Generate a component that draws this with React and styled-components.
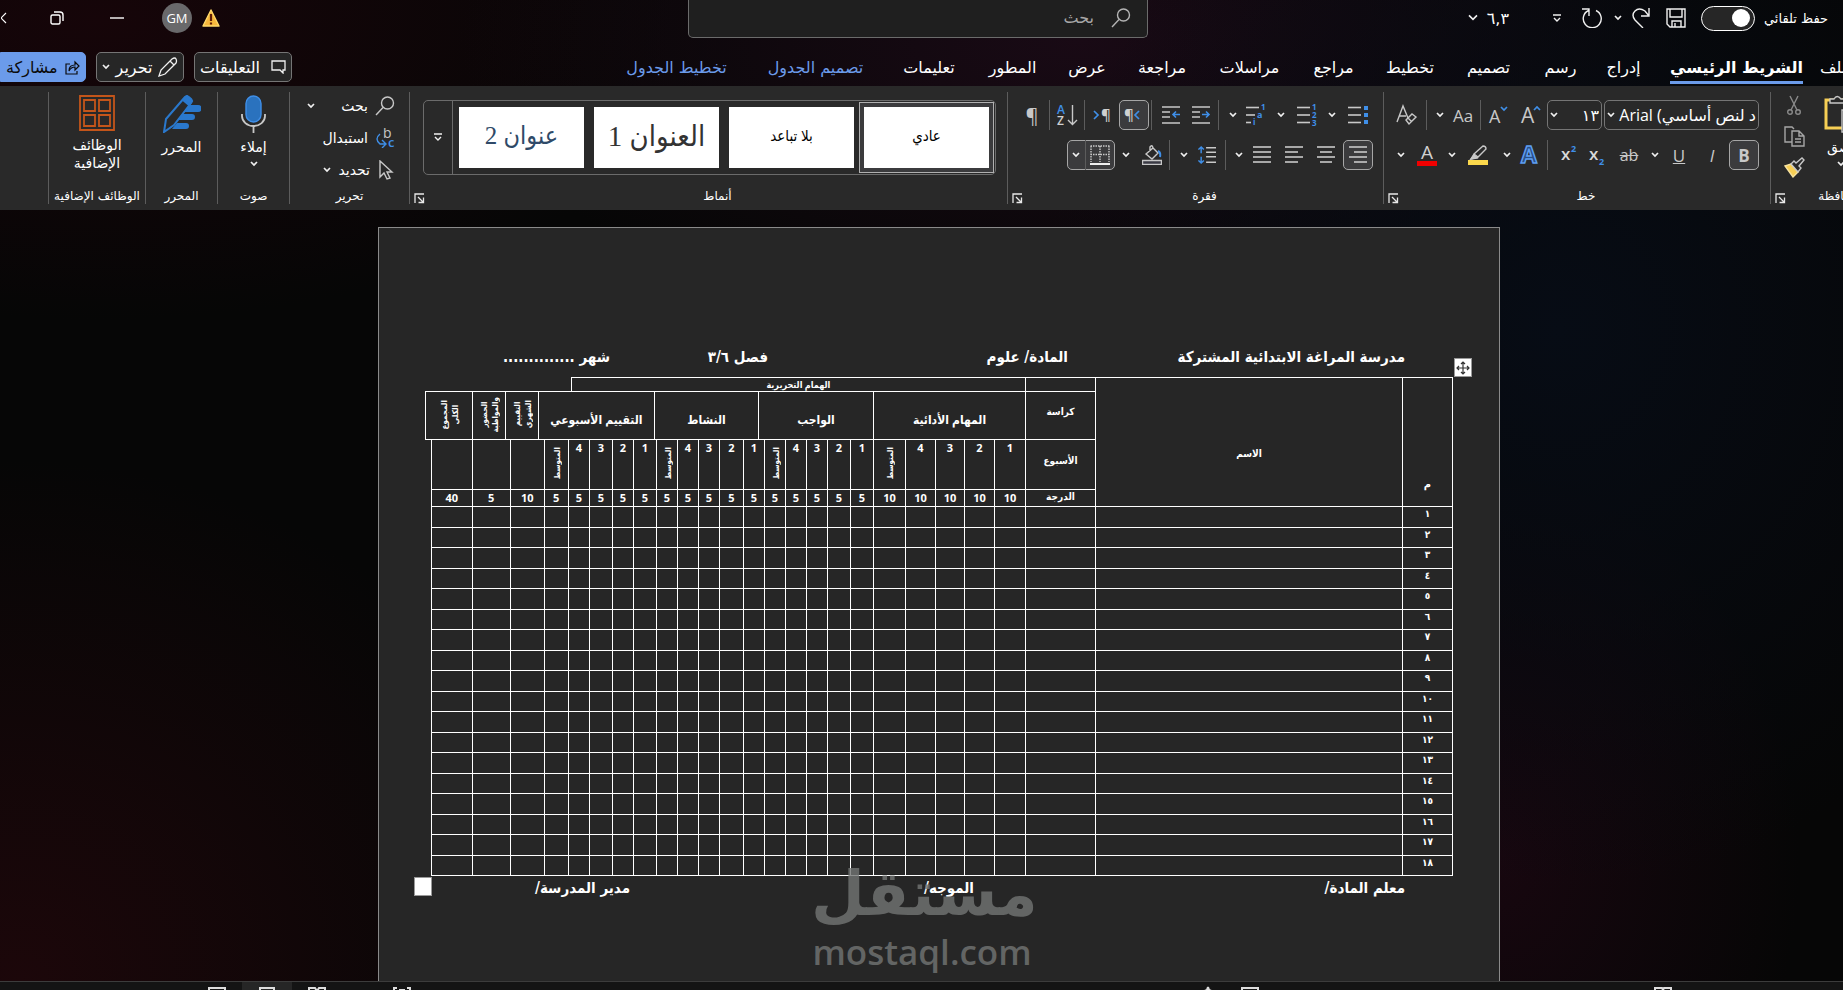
import React, { useState } from "react";
import styled, { createGlobalStyle, css } from "styled-components";

const GlobalStyle = createGlobalStyle`
  * {
    box-sizing: border-box;
  }

  body {
    margin: 0;
    background: #060606;
    color: #fff;
    font-family: "DejaVu Sans", sans-serif;
    overflow: hidden;
  }

  button,
  input {
    font-family: inherit;
    color: inherit;
  }
`;

const Window = styled.div`
  display: flex;
  flex-direction: column;
  height: 100vh;
  overflow: hidden;
  background: radial-gradient(ellipse 520px 560px at 1560px 330px, #070c15, transparent),
    radial-gradient(ellipse 560px 520px at 20px 980px, #1c070a, transparent),
    radial-gradient(ellipse 620px 300px at 1080px 40px, #190a15, transparent),
    radial-gradient(ellipse 620px 300px at 100px 20px, #160509, transparent),
    radial-gradient(ellipse 300px 400px at 1500px 860px, #17070f, transparent), #060606;
`;

const TitleBar = styled.header`
  display: grid;
  grid-template-columns: minmax(0, 1fr) 460px minmax(0, 1fr);
  height: 38px;
  padding-right: 7px;
`;

const TitleTools = styled.div`
  display: flex;
  align-items: center;
  height: 36px;
  padding-right: 8px;
`;

const WindowTools = styled.div`
  display: flex;
  align-items: center;
  justify-content: flex-end;
  height: 36px;
`;

const SearchBox = styled.label`
  display: flex;
  align-items: center;
  gap: 17px;
  height: 38px;
  padding: 0 16px 2px;
  background: #1f1f1f;
  border: 1px solid #6b6b6b;
  border-top: 0;
  border-radius: 0 0 5px 5px;
  color: #b4b4b4;

  input {
    flex: 1;
    min-width: 0;
    padding: 0;
    border: 0;
    outline: 0;
    background: transparent;
    font-size: 16px;
  }

  input::placeholder {
    color: #a8a8a8;
    opacity: 1;
  }
`;

const AutoSave = styled.label`
  display: flex;
  align-items: center;
  gap: 9px;
  font-size: 13px;
  white-space: nowrap;

  input {
    appearance: none;
    display: flex;
    align-items: center;
    width: 54px;
    height: 25px;
    margin: 0;
    padding: 0 4px;
    background: #262626;
    border: 1px solid #fff;
    border-radius: 13px;
  }

  input::before {
    content: "";
    width: 18px;
    height: 18px;
    border-radius: 50%;
    background: #fff;
  }
`;

const IconButton = styled.button`
  flex: none;
  display: flex;
  align-items: center;
  justify-content: center;
  width: ${(props) => props.$w || 30}px;
  height: 30px;
  padding: 0;
  border: 1px solid transparent;
  border-radius: 5px;
  background: transparent;
  color: #c8c8c8;
  font-family: "Open Sans", sans-serif;
  font-size: ${(props) => props.$size || 17}px;

  ${(props) =>
    props.$active &&
    css`
      background: #3b3b3d;
      border-color: #a6a6a6;
    `}
`;

const Version = styled.button`
  display: flex;
  align-items: center;
  gap: 8px;
  margin-right: 26px;
  padding: 0;
  border: 0;
  background: transparent;
  font-size: 16px;
`;

const Avatar = styled.button`
  width: 30px;
  height: 30px;
  margin: 0 9px 0 30px;
  padding: 0;
  border: 0;
  border-radius: 50%;
  background: #69696b;
  font: 13px "Open Sans", sans-serif;
`;

const TabBar = styled.nav`
  display: flex;
  align-items: flex-start;
  justify-content: space-between;
  height: 48px;
  padding-top: 14px;
`;

const Tabs = styled.div`
  display: flex;
  align-items: center;
  height: 32px;
`;

const Tab = styled.button`
  flex: none;
  width: ${(props) => props.$w}px;
  height: 32px;
  padding: 0;
  border: 0;
  background: transparent;
  color: ${(props) => (props.$blue ? "#6b9bea" : "#fff")};
  font-size: 16px;
  white-space: nowrap;

  span {
    display: inline-block;
    height: 32px;
    line-height: 31px;
  }

  ${(props) =>
    props.$current &&
    css`
      font-weight: bold;

      span {
        border-bottom: 3px solid #6b9bea;
      }
    `}
`;

const FileTab = styled(Tab)`
  margin-right: -17px;
  text-align: left;
`;

const Actions = styled.div`
  display: flex;
  gap: 10px;
`;

const ActionButton = styled.button`
  display: flex;
  align-items: center;
  justify-content: space-between;
  width: ${(props) => props.$w}px;
  height: 30px;
  padding: 0 5px;
  border: 1px solid #757575;
  border-radius: 5px;
  background: #262626;
  font-size: 16px;
  white-space: nowrap;
`;

const ShareButton = styled(ActionButton)`
  border-color: #6b9bea;
  border-radius: 0 5px 5px 0;
  background: #6b9bea;
  color: #0c0c0c;
`;

const Ribbon = styled.section`
  display: flex;
  flex: none;
  height: 124px;
  padding: 6px 0;
  background: #292929;
`;

const Group = styled.div`
  position: relative;
  flex: none;
  display: flex;
  flex-direction: column;
  width: ${(props) => props.$w}px;
  height: 112px;
  border-left: 1px solid #5c5c5c;
`;

// runs past the right edge of the window
const ClippedGroup = styled(Group)`
  margin-right: -45px;
`;

const GroupBody = styled.div`
  display: flex;
  flex-direction: column;
  gap: 10px;
  height: 97px;
  padding: ${(props) => props.$pad || "3px 0 0"};
`;

const ClipBody = styled(GroupBody)`
  flex-direction: row;
  gap: 9px;
`;

const GroupLabel = styled.div`
  height: 15px;
  padding-left: ${(props) => (props.$launcher ? 18 : 0)}px;
  font-size: 12px;
  line-height: 15px;
  text-align: center;
  white-space: nowrap;
`;

const Launcher = styled.button`
  position: absolute;
  left: 4px;
  bottom: 0;
  width: 11px;
  height: 11px;
  padding: 0;
  border: 0;
  background: transparent;
  line-height: 0;
`;

const ToolRow = styled.div`
  display: flex;
  align-items: center;
  height: 30px;
`;

const Separator = styled.div`
  flex: none;
  width: ${(props) => props.$w}px;
  height: 30px;
  display: flex;
  justify-content: center;

  &::before {
    content: "";
    width: 1px;
    background: #5c5c5c;
  }
`;

const Combo = styled.div`
  display: flex;
  align-items: center;
  width: ${(props) => props.$w}px;
  height: 30px;
  margin-left: ${(props) => props.$gap || 0}px;
  padding: 0 2px 0 0;
  border: 1px solid #757575;
  border-radius: 5px;

  input {
    flex: 1;
    min-width: 0;
    padding: 0;
    border: 0;
    outline: 0;
    background: transparent;
    font: 16px "Open Sans", "DejaVu Sans", sans-serif;
  }

  button {
    width: 12px;
    border: 0;
    padding: 0;
    background: transparent;
    line-height: 0;
  }
`;

const Gallery = styled.div`
  display: flex;
  justify-content: space-between;
  height: 75px;
  border: 1px solid #6b6b6b;
  border-radius: 5px;
`;

const StyleCards = styled.div`
  display: flex;
  padding: 1px;
`;

const StyleFrame = styled.button`
  width: 135px;
  height: 71px;
  padding: 4px;
  border: 1px solid ${(props) => (props.$selected ? "#b0b0b0" : "transparent")};
  background: ${(props) => (props.$selected ? "#3b3b3d" : "transparent")};

  span {
    display: flex;
    align-items: center;
    justify-content: center;
    height: 61px;
    padding-bottom: 4px;
    background: #fff;
    color: ${(props) => props.$color || "#000"};
    font-family: "Liberation Serif", "DejaVu Sans Condensed", serif;
    font-size: ${(props) => props.$size || 15}px;
  }
`;

const GalleryMore = styled.button`
  width: 29px;
  padding: 0;
  border: 0;
  border-right: 1px solid #6b6b6b;
  background: transparent;
`;

const LineButton = styled.button`
  display: flex;
  align-items: center;
  gap: 7px;
  height: 22px;
  padding: 0;
  border: 0;
  background: transparent;
  font-size: 14px;

  svg:last-child {
    margin-right: ${(props) => props.$push || 0}px;
  }
`;

const BigButton = styled.button`
  display: flex;
  flex-direction: column;
  align-items: center;
  gap: 5px;
  width: 100%;
  padding: 0;
  border: 0;
  background: transparent;
  font-size: 14px;
  line-height: 18px;

  svg {
    flex: none;
  }
`;

const ClipTools = styled.div`
  display: flex;
  flex-direction: column;
  align-items: center;
  gap: 10px;
  width: 26px;
`;

const PasteButton = styled(BigButton)`
  flex: none;
  width: 50px;
`;

const Workspace = styled.main`
  flex: 1;
  display: flex;
  justify-content: center;
  min-height: 0;
  padding: 17px 0 0 35px;
  overflow: hidden;
`;

const Paper = styled.article`
  position: relative;
  width: 1122px;
  padding: 117px 46px 0 47px;
  border: 1px solid #8a8a8a;
  border-bottom: 0;
  background: #262626;
`;

const DocLine = styled.div`
  display: grid;
  grid-template-columns: ${(props) => props.$cols};
  height: ${(props) => props.$h}px;
  padding-right: 48px;
  font-family: "DejaVu Sans Condensed", sans-serif;
  font-size: 15px;
  font-weight: bold;
  line-height: 24px;
  white-space: nowrap;
`;

const TableWrap = styled.div`
  position: relative;
`;

const MoveHandle = styled.button`
  position: absolute;
  top: -19px;
  right: -19px;
  width: 18px;
  height: 19px;
  padding: 0;
  border: 1px solid #999;
  background: #fff;
  line-height: 0;
`;

const SizeHandle = styled.span`
  position: absolute;
  bottom: -20px;
  left: -12px;
  width: 18px;
  height: 19px;
  border: 1px solid #999;
  background: #fff;
`;

const Sheet = styled.table`
  width: 100%;
  height: 499px;
  table-layout: fixed;
  border-collapse: collapse;
`;

const Cell = styled.td`
  padding: ${(props) => props.$pad || "0"};
  border: ${(props) => (props.$blank ? "0" : "1px solid #fff")};
  line-height: 12px;
  text-align: center;
  vertical-align: ${(props) => props.$align || "middle"};
  font-family: "Open Sans", "DejaVu Sans Condensed", sans-serif;
  font-size: ${(props) => props.$size || 11}px;
  font-weight: bold;
  white-space: nowrap;
`;

const HeadRow = styled.tr`
  height: ${(props) => props.$h}px;
`;

const Upright = styled.span`
  display: inline-block;
  writing-mode: vertical-rl;
  transform: rotate(180deg);
  font-size: 8px;
  line-height: 11px;
`;

const Watermark = styled.div`
  position: absolute;
  left: 432px;
  bottom: 9px;
  width: 222px;
  color: #737574;
  text-align: center;
  opacity: 0.8;
  direction: ltr;
  pointer-events: none;

  strong {
    display: block;
    font: bold 62px/76px "DejaVu Sans", sans-serif;
  }

  span {
    display: block;
    font: 600 35px/40px "Open Sans", sans-serif;
  }
`;

const StatusBar = styled.footer`
  display: flex;
  flex: none;
  height: 9px;
  padding: 0 170px 0 114px;
  border-top: 1px solid #3c3c3c;
  background: #141414;
  overflow: hidden;
`;

const StatusGroup = styled.div`
  display: flex;
  align-items: flex-start;
  gap: ${(props) => props.$gap || 0}px;
  margin-right: ${(props) => props.$push};
`;

const StatusButton = styled.button`
  flex: none;
  display: flex;
  justify-content: center;
  align-items: flex-start;
  width: ${(props) => props.$w || 20}px;
  height: 24px;
  margin-left: ${(props) => props.$gap || 0}px;
  padding: 4px 0 0;
  border: 0;
  background: ${(props) => (props.$active ? "#262626" : "transparent")};
`;

const Icon = ({ w = 20, h = w, box, children, stroke = "#c8c8c8", sw = 1.4 }) => (
  <svg
    width={w}
    height={h}
    viewBox={box || `0 0 ${w} ${h}`}
    fill="none"
    stroke={stroke}
    strokeWidth={sw}
    aria-hidden="true"
  >
    {children}
  </svg>
);

const Chevron = ({ w = 8 }) => (
  <Icon w={w} h={w / 2 + 2} box="0 0 8 6" stroke="#f0f0f0" sw={w > 8 ? 1.2 : 1.7}>
    <path d="M1 1l3 3 3-3" />
  </Icon>
);

const ChevronButton = ({ w, label }) => (
  <IconButton $w={w} aria-label={label}>
    <Chevron />
  </IconButton>
);

const MoreIcon = () => (
  <Icon w={10} h={9} stroke="#f0f0f0">
    <path d="M1 1h8M2 4l3 3 3-3" />
  </Icon>
);

const Corner = () => (
  <Launcher aria-label="المزيد">
    <Icon w={11} stroke="#e8e8e8" sw={1.3}>
      <path d="M1 10V1h9M4 4l5 5M9.500 4.500v5h-5" />
    </Icon>
  </Launcher>
);

const blue = "#3f8fe8";

// rows: [x1, x2] of each line, top to bottom
const Lines = ({ rows, step = 5, top = 2 }) =>
  rows.map(([a, b], i) => <path key={i} d={`M${a} ${top + i * step}H${b}`} strokeWidth="1.6" />);

const AlignIcon = ({ rows }) => (
  <Icon w={20} h={20}>
    <Lines rows={rows} />
  </Icon>
);

const IconText = ({ x, y, size = 7, fill = blue, weight = 700, children }) => (
  <text
    x={x}
    y={y}
    fontSize={size}
    fill={fill}
    stroke="none"
    fontWeight={weight}
    fontFamily="Open Sans"
    direction="ltr"
  >
    {children}
  </text>
);

const BulletsIcon = () => (
  <Icon w={20} h={20}>
    <Lines rows={[[0, 13], [0, 13], [0, 13]]} step={7.5} top={2.5} />
    <path d="M16 1h4v4h-4zM16 8h4v4h-4zM16 15h4v4h-4z" fill={blue} stroke="none" />
  </Icon>
);

const NumberingIcon = () => (
  <Icon w={20} h={22}>
    <Lines rows={[[0, 13], [0, 13], [0, 13]]} step={7.5} top={3.5} />
    <IconText x={15} y={6} size={8}>1</IconText>
    <IconText x={15} y={14} size={8}>2</IconText>
    <IconText x={15} y={22} size={8}>3</IconText>
  </Icon>
);

const MultiIcon = () => (
  <Icon w={20} h={22}>
    <Lines rows={[[0, 13], [0, 9], [0, 5]]} step={7.5} top={3.5} />
    <IconText x={15} y={6} size={8}>1</IconText>
    <IconText x={11} y={14} size={9}>a</IconText>
    <IconText x={7} y={21} size={8}>i</IconText>
  </Icon>
);

const IndentIcon = ({ left }) => (
  <Icon w={20} h={20}>
    <path d="M1 2h18M1 7h8M1 12h8M1 18h18" strokeWidth="1.6" />
    <path
      stroke={blue}
      strokeWidth="1.6"
      d={left ? "M19 9.500h-7M15 6.500l-3 3 3 3" : "M11 9.500h7M15 6.500l3 3-3 3"}
    />
  </Icon>
);

const DirectionIcon = ({ rtl }) => (
  <Icon w={20} h={16}>
    <IconText x={rtl ? 0 : 8} y={13} size={15} fill="#d0d0d0" weight={600}>
      ¶
    </IconText>
    <path stroke={blue} strokeWidth="1.7" d={rtl ? "M15 4l-4 4 4 4" : "M1 4l4 4-4 4"} />
  </Icon>
);

const SortIcon = () => (
  <Icon w={22} h={22}>
    <IconText x={1} y={10} size={12} weight={600}>A</IconText>
    <IconText x={1} y={21} size={12} fill="#d0d0d0" weight={600}>Z</IconText>
    <path d="M16.500 1v19M12 16l4.500 4.500 4.500-4.500" />
  </Icon>
);

const SpacingIcon = () => (
  <Icon w={20} h={20}>
    <path d="M9 2h11M9 7h11M9 12h11M9 18h11" strokeWidth="1.6" />
    <path stroke={blue} strokeWidth="1.6" d="M3.500 1v7M.500 4l3-3 3 3M3.500 12v7M.500 16l3 3 3-3" />
  </Icon>
);

const FillIcon = () => (
  <Icon w={20} h={20}>
    <path d="M4 9l7-6 5 5-6 6zM8 6V2q2-3 3 1" />
    <path d="M16 6q3 1 2 6" stroke={blue} strokeWidth="2" />
    <path d="M.500 15.500h19v4H.500z" fill="#3a3a44" />
  </Icon>
);

const BordersIcon = () => (
  <Icon w={20} h={20}>
    <path d="M.500 1h19M.500 9.500h19M1 1v16M10 1v16M19 1v16" strokeDasharray="1.500 1" />
    <path d="M0 19h20" strokeWidth="2" stroke="#eee" />
  </Icon>
);

const ClearIcon = () => (
  <Icon w={22} h={22}>
    <path d="M1 18L7 2l5 12M3 12h7" />
    <path d="M10 16l6-6 4 3-7 7zM12 14l4 4" />
  </Icon>
);

const GrowIcon = ({ down }) => (
  <Icon w={22} h={20}>
    <IconText x={1} y={18} size={down ? 18 : 21} fill="#c8c8c8" weight={400}>
      A
    </IconText>
    <path stroke={blue} strokeWidth="1.7" d={down ? "M13 2l3 3 3-3" : "M14 5l3-3 3 3"} />
  </Icon>
);

const HighlightIcon = () => (
  <Icon w={20} h={20}>
    <path d="M6 9L15 1q3 0 3 3L10 12zM6 9l-3 5 7-2" />
    <path d="M3 14l3-4 3 3z" fill="#c8c8c8" />
    <path d="M0 17.500h20" stroke="#fbd84c" strokeWidth="5" />
  </Icon>
);

const FontColorIcon = () => (
  <Icon w={20} h={21}>
    <IconText x={4} y={14} size={19} fill="#d0d0d0" weight={400}>A</IconText>
    <path d="M0 18.500h20" stroke="#f00000" strokeWidth="5" />
  </Icon>
);

const EffectsIcon = () => (
  <Icon w={20} h={20}>
    <text
      x="2"
      y="18"
      fontSize="23"
      fontWeight="700"
      fontFamily="Open Sans"
      direction="ltr"
      fill="#2a4f86"
      stroke="#5d9df0"
      strokeWidth="1.5"
    >
      A
    </text>
  </Icon>
);

const ScriptIcon = ({ sup }) => (
  <Icon w={16} h={22}>
    <IconText x={0} y={16} size={17} fill="#d8d8d8" weight={600}>x</IconText>
    <IconText x={10} y={sup ? 8 : 21} size={9}>2</IconText>
  </Icon>
);

const SaveIcon = () => (
  <Icon w={20} h={20} stroke="#f0f0f0">
    <path d="M1 1h18v18H4l-3-3zM4 1v8h12V1M6 19v-6h9v6M9 19v-4" />
  </Icon>
);

const RedoIcon = () => (
  <Icon w={18} h={20} stroke="#f0f0f0">
    <path d="M17 0v8h-8M17 8L13 3Q7-1 3 3t0 9l8 8" />
  </Icon>
);

const UndoIcon = () => (
  <Icon w={20} h={20} stroke="#f0f0f0">
    <path d="M0 1h7v7M14 2.500A9 9 0 1 1 6.500 2.500" />
  </Icon>
);

const SearchIcon = ({ stroke }) => (
  <Icon w={20} h={20} stroke={stroke}>
    <circle cx="12.500" cy="7" r="6" />
    <path d="M8 11.500L1 19" />
  </Icon>
);

const WarningIcon = () => (
  <Icon w={20} h={20}>
    <path d="M10 2l8 16H2z" fill="#f6b73c" stroke="#ffd96a" strokeLinejoin="round" />
    <path d="M10 6v7M10 14.500v2" stroke="#5d1c06" strokeWidth="2.2" />
  </Icon>
);

const CutIcon = () => (
  <Icon w={14} h={21} stroke="#8a8a8a">
    <path d="M3 1l7 14M11 1L4 15" />
    <circle cx="3" cy="17" r="2.3" />
    <circle cx="11" cy="17" r="2.3" />
  </Icon>
);

const CopyIcon = () => (
  <Icon w={21} h={21} stroke="#a6a6a6">
    <path d="M8 16H1V1h7l2 2M8 5h7l5 5v10H8zM15 5v5h5M11 13h6M11 16h6" />
  </Icon>
);

const BrushIcon = () => (
  <Icon w={21} h={21}>
    <path d="M1 9l6-2 7 8-5 5z" fill="#f7cf55" stroke="#f7e3a0" />
    <path d="M7 7l3-3 2 2 6-5 2 2-5 6 2 2-3 4z" fill="#292929" />
  </Icon>
);

const PasteIcon = () => (
  <Icon w={36} h={38}>
    <path d="M3 5h28v28H3z" stroke="#f7cf55" strokeWidth="3" />
    <path d="M7 8V4h4q3-5 7 0h6v4z" fill="#292929" />
    <path d="M19 15h15v22H19z" fill="#292929" />
  </Icon>
);

const MicIcon = () => (
  <Icon w={26} h={38}>
    <rect x="5" y="1" width="15" height="26" rx="7.5" fill="#2a72be" stroke={blue} />
    <path d="M1 19v2a11.500 10 0 0 0 23 0v-2M12.500 31v7" strokeWidth="1.8" />
  </Icon>
);

const EditorIcon = () => (
  <Icon w={38} h={38} stroke="#2a78cc" sw={2}>
    <path
      d="M26 10h9a3.500 3.500 0 0 1 0 7H21zM20 19h9a3 3 0 0 1 0 6H15zM14 28h9a3 3 0 0 1 0 6H9z"
      fill="#2a78cc"
      strokeWidth="0"
    />
    <path d="M1 37l2-13L22 2q2-2 5 1 3 2 1 5L11 30z" />
    <path d="M20 5l6 5 3-4-5-5z" fill="#2a78cc" />
  </Icon>
);

const AddinsIcon = () => (
  <Icon w={36} h={36} stroke="#c4551a" sw={1.8}>
    <path d="M1 1h34v34H1zM5 5h11v11H5zM20 5h11v11H20zM5 20h11v11H5zM20 20h11v11H20z" />
  </Icon>
);

const ReplaceIcon = () => (
  <Icon w={20} h={20}>
    <IconText x={8} y={10} size={14} fill="#c8c8c8" weight={400}>b</IconText>
    <IconText x={13} y={19} size={13} weight={600}>c</IconText>
    <path stroke={blue} d="M5 6q-6 5 0 10h5M7 12l4 4-4 4" />
  </Icon>
);

const SelectIcon = () => (
  <Icon w={18} h={20}>
    <path d="M3 1v16l4-4 3 6 3-1-3-6h5z" />
  </Icon>
);

const CommentIcon = () => (
  <Icon w={15} h={14} stroke="#f0f0f0" sw={1.3}>
    <path d="M1 1h13v9h-2v3l-3-3H1z" />
  </Icon>
);

const PencilIcon = () => (
  <Icon w={20} h={20} stroke="#f0f0f0" sw={1.3}>
    <path d="M1 19l2-6L14 2q3-2 4 0t0 4L7 17zM12 4l4 4" />
  </Icon>
);

const ShareIcon = () => (
  <Icon w={15} h={15} stroke="#0c0c0c" sw={1.2}>
    <path d="M5 4H1v10h11v-3M4 11q0-6 6-6V2l4 4-4 4V7q-4 0-6 4z" />
  </Icon>
);

const StatusIcon = ({ d, w = 18 }) => (
  <Icon w={w} h={12} stroke="#ddd" sw={2}>
    <path d={d} />
  </Icon>
);

const tabs = [
  { text: "الشريط الرئيسي", w: 167, current: true },
  { text: "إدراج", w: 59 },
  { text: "رسم", w: 67 },
  { text: "تصميم", w: 77 },
  { text: "تخطيط", w: 80 },
  { text: "مراجع", w: 73 },
  { text: "مراسلات", w: 95 },
  { text: "مراجعة", w: 80 },
  { text: "عرض", w: 70 },
  { text: "المطور", w: 79 },
  { text: "تعليمات", w: 88 },
  { text: "تصميم الجدول", w: 139, blue: true },
  { text: "تخطيط الجدول", w: 139, blue: true },
];

const cards = [
  { text: "عادي", selected: true },
  { text: "بلا تباعد" },
  { text: "العنوان 1", size: 29, color: "#333" },
  { text: "عنوان 2", size: 25, color: "#2f4a68" },
];

// Column widths from the right edge; some exist only so that the
// merged header cells can end between two body columns.
const columns = [
  50, 307, 70, 31, 30, 29, 30, 32, 23, 23, 21, 21, 21, 6, 15, 24, 21, 21, 21, 2, 21, 21, 23, 18, 3,
  24, 6, 28, 5, 33, 41, 6,
];

// [week, colSpan, full mark]
const weekCells = [
  ["1", 1, 10], ["2", 1, 10], ["3", 1, 10], ["4", 1, 10], ["المتوسط", 1, 10],
  ["1", 1, 5], ["2", 1, 5], ["3", 1, 5], ["4", 1, 5], ["المتوسط", 1, 5],
  ["1", 2, 5], ["2", 1, 5], ["3", 1, 5], ["4", 1, 5], ["المتوسط", 1, 5],
  ["1", 2, 5], ["2", 1, 5], ["3", 1, 5], ["4", 2, 5], ["المتوسط", 1, 5],
  ["", 2, 10], ["", 2, 5], ["", 1, 40],
];

const groupCells = [
  ["المهام الأدائية", 5],
  ["الواجب", 6],
  ["النشاط", 6],
  ["التقييم الأسبوعي", 7],
];

const totalCells = [
  ["التقييم", "الشهري", 2],
  ["الحضور", "والمواظبة", 1],
  ["المجموع", "الكلي", 2],
];

const rowNumbers = [
  "١", "٢", "٣", "٤", "٥", "٦", "٧", "٨", "٩",
  "١٠", "١١", "١٢", "١٣", "١٤", "١٥", "١٦", "١٧", "١٨",
];

const GradeTable = () => (
  <Sheet>
    <colgroup>
      {columns.map((w, i) => (
        <col key={i} style={{ width: w }} />
      ))}
    </colgroup>
    <thead>
      <HeadRow $h={14}>
        <Cell as="th" rowSpan={4} $align="bottom" $pad="0 0 16px">م</Cell>
        <Cell as="th" rowSpan={4} $size={10} $pad="22px 0 0">الاسم</Cell>
        <Cell />
        <Cell as="th" colSpan={21} $size={9}>الهمام التحريرية</Cell>
        <Cell colSpan={8} $blank />
      </HeadRow>
      <HeadRow $h={48}>
        <Cell as="th" $size={10} $pad="0 0 10px">كراسة</Cell>
        {groupCells.map(([text, span]) => (
          <Cell as="th" key={text} colSpan={span} $size={12} $pad="8px 0 0">{text}</Cell>
        ))}
        {totalCells.map(([a, b, span]) => (
          <Cell as="th" key={a} colSpan={span}>
            <Upright>
              {a}
              <br />
              {b}
            </Upright>
          </Cell>
        ))}
      </HeadRow>
      <HeadRow $h={50}>
        <Cell as="th" $size={10} $pad="0 0 10px">الأسبوع</Cell>
        {weekCells.map(([text, span], i) =>
          text.length > 1 ? (
            <Cell as="th" key={i} colSpan={span}>
              <Upright>{text}</Upright>
            </Cell>
          ) : (
            <Cell as="th" key={i} colSpan={span} $align="top" $pad="2px 0 0">
              {text}
            </Cell>
          )
        )}
        <Cell $blank />
      </HeadRow>
      <HeadRow $h={16}>
        <Cell as="th" $size={10} $pad="0 0 4px">الدرجة</Cell>
        {weekCells.map(([, span, grade], i) => (
          <Cell as="th" key={i} colSpan={span}>{grade}</Cell>
        ))}
        <Cell $blank />
      </HeadRow>
    </thead>
    <tbody>
      {rowNumbers.map((n) => (
        <tr key={n}>
          <Cell $align="top" $size={10}>{n}</Cell>
          <Cell />
          <Cell />
          {weekCells.map(([, span], i) => (
            <Cell key={i} colSpan={span} />
          ))}
          <Cell $blank />
        </tr>
      ))}
    </tbody>
  </Sheet>
);

const App = () => {
  const [autoSave, setAutoSave] = useState(false);
  const [query, setQuery] = useState("");
  const [font, setFont] = useState("د لنص أساسي) Arial");
  const [size, setSize] = useState("١٣");

  return (
    <Window dir="rtl">
      <GlobalStyle />
      <TitleBar>
        <TitleTools>
          <AutoSave>
            حفظ تلقائي
            <input
              type="checkbox"
              role="switch"
              checked={autoSave}
              onChange={(e) => setAutoSave(e.target.checked)}
            />
          </AutoSave>
          <IconButton $w={50} aria-label="حفظ"><SaveIcon /></IconButton>
          <IconButton $w={20} aria-label="إعادة"><RedoIcon /></IconButton>
          <ChevronButton w={26} label="خيارات الإعادة" />
          <IconButton $w={26} aria-label="تراجع"><UndoIcon /></IconButton>
          <IconButton $w={44} aria-label="تخصيص"><MoreIcon /></IconButton>
          <Version>
            ٦,٣
            <Chevron w={12} />
          </Version>
        </TitleTools>
        <SearchBox>
          <SearchIcon stroke="#b4b4b4" />
          <input
            type="text"
            placeholder="بحث"
            value={query}
            onChange={(e) => setQuery(e.target.value)}
          />
        </SearchBox>
        <WindowTools>
          <WarningIcon />
          <Avatar>GM</Avatar>
          <IconButton $w={30} aria-label="تصغير">
            <Icon w={14} h={2} stroke="#fff"><path d="M0 1h14" /></Icon>
          </IconButton>
          <IconButton $w={90} aria-label="استعادة">
            <Icon w={14} h={14} stroke="#fff">
              <rect x="1" y="4" width="9" height="9" rx="1.5" />
              <path d="M4 1h6q3 0 3 3v6" />
            </Icon>
          </IconButton>
          <IconButton $w={12} aria-label="إغلاق">
            <Icon w={12} h={12} box="6 0 12 12" stroke="#fff"><path d="M0 0l12 12M12 0L0 12" /></Icon>
          </IconButton>
        </WindowTools>
      </TitleBar>

      <TabBar>
        <Tabs>
          <FileTab $w={40}><span>ملف</span></FileTab>
          {tabs.map((tab) => (
            <Tab key={tab.text} $w={tab.w} $current={tab.current} $blue={tab.blue}>
              <span>{tab.text}</span>
            </Tab>
          ))}
        </Tabs>
        <Actions>
          <ActionButton $w={98}><CommentIcon />التعليقات</ActionButton>
          <ActionButton $w={88}><PencilIcon />تحرير<Chevron /></ActionButton>
          <ShareButton $w={86}><ShareIcon />مشاركة</ShareButton>
        </Actions>
      </TabBar>

      <Ribbon>
        <ClippedGroup $w={118}>
          <ClipBody $pad="3px 22px 0 0">
            <PasteButton><PasteIcon />لصق<Chevron /></PasteButton>
            <ClipTools>
              <CutIcon />
              <CopyIcon />
              <BrushIcon />
            </ClipTools>
          </ClipBody>
          <GroupLabel $launcher>الحافظة</GroupLabel>
          <Corner />
        </ClippedGroup>

        <Group $w={387}>
          <GroupBody $pad="8px 11px 0 0">
            <ToolRow>
              <Combo $w={155} $gap={2}>
                <input aria-label="الخط" value={font} onChange={(e) => setFont(e.target.value)} />
                <button aria-label="قائمة الخطوط"><Chevron /></button>
              </Combo>
              <Combo $w={55}>
                <input aria-label="حجم الخط" value={size} onChange={(e) => setSize(e.target.value)} />
                <button aria-label="قائمة الأحجام"><Chevron /></button>
              </Combo>
              <IconButton $w={32} aria-label="تكبير الخط"><GrowIcon /></IconButton>
              <IconButton $w={32} aria-label="تصغير الخط"><GrowIcon down /></IconButton>
              <Separator $w={5} />
              <IconButton $w={30}>Aa</IconButton>
              <ChevronButton w={16} label="حالة الأحرف" />
              <Separator $w={12} />
              <IconButton $w={26} aria-label="مسح التنسيق"><ClearIcon /></IconButton>
            </ToolRow>
            <ToolRow>
              <IconButton $active><b>B</b></IconButton>
              <IconButton $w={34}><i>I</i></IconButton>
              <IconButton $w={32}><u>U</u></IconButton>
              <ChevronButton w={16} label="نمط التسطير" />
              <IconButton $w={36} $size={16}><s>ab</s></IconButton>
              <IconButton $w={28} aria-label="منخفض"><ScriptIcon /></IconButton>
              <IconButton $w={28} aria-label="مرتفع"><ScriptIcon sup /></IconButton>
              <Separator $w={15} />
              <IconButton $w={22} aria-label="تأثيرات النص"><EffectsIcon /></IconButton>
              <ChevronButton w={22} label="قائمة التأثيرات" />
              <IconButton $w={36} aria-label="تمييز"><HighlightIcon /></IconButton>
              <ChevronButton w={16} label="ألوان التمييز" />
              <IconButton $w={34} aria-label="لون الخط"><FontColorIcon /></IconButton>
              <ChevronButton w={18} label="ألوان الخط" />
            </ToolRow>
          </GroupBody>
          <GroupLabel $launcher>خط</GroupLabel>
          <Corner />
        </Group>

        <Group $w={376}>
          <GroupBody $pad="8px 10px 0 0">
            <ToolRow>
              <IconButton $w={30} aria-label="تعداد نقطي"><BulletsIcon /></IconButton>
              <ChevronButton w={22} label="رموز نقطية" />
              <IconButton $w={28} aria-label="ترقيم"><NumberingIcon /></IconButton>
              <ChevronButton w={24} label="تنسيق الأرقام" />
              <IconButton $w={26} aria-label="متعدد المستويات"><MultiIcon /></IconButton>
              <ChevronButton w={20} label="قائمة المستويات" />
              <Separator $w={10} />
              <IconButton $w={24} aria-label="إنقاص المسافة"><IndentIcon /></IconButton>
              <IconButton $w={36} aria-label="زيادة المسافة"><IndentIcon left /></IconButton>
              <Separator $w={4} />
              <IconButton $active aria-label="من اليمين إلى اليسار"><DirectionIcon rtl /></IconButton>
              <IconButton $w={32} aria-label="من اليسار إلى اليمين"><DirectionIcon /></IconButton>
              <Separator $w={6} />
              <IconButton $w={28} aria-label="فرز"><SortIcon /></IconButton>
              <Separator $w={8} />
              <IconButton $w={26} $size={20}>¶</IconButton>
            </ToolRow>
            <ToolRow>
              <IconButton $active aria-label="يمين">
                <AlignIcon rows={[[1, 19], [6, 19], [1, 19], [6, 19]]} />
              </IconButton>
              <IconButton $w={34} aria-label="توسيط">
                <AlignIcon rows={[[1, 19], [4, 16], [1, 19], [4, 16]]} />
              </IconButton>
              <IconButton $w={30} aria-label="يسار">
                <AlignIcon rows={[[1, 19], [1, 14], [1, 19], [1, 14]]} />
              </IconButton>
              <IconButton $w={34} aria-label="ضبط">
                <AlignIcon rows={[[1, 19], [1, 19], [1, 19], [1, 19]]} />
              </IconButton>
              <ChevronButton w={12} label="خيارات الضبط" />
              <Separator $w={16} />
              <IconButton $w={20} aria-label="تباعد الأسطر"><SpacingIcon /></IconButton>
              <ChevronButton w={26} label="خيارات التباعد" />
              <Separator $w={4} />
              <IconButton $w={30} aria-label="تظليل"><FillIcon /></IconButton>
              <ChevronButton w={22} label="ألوان التظليل" />
              <IconButton $w={48} $active aria-label="حدود">
                <BordersIcon />
                <Separator $w={10} as="span" />
                <Chevron />
              </IconButton>
            </ToolRow>
          </GroupBody>
          <GroupLabel $launcher>فقرة</GroupLabel>
          <Corner />
        </Group>

        <Group $w={598}>
          <GroupBody $pad="8px 11px 0 13px">
            <Gallery>
              <StyleCards>
                {cards.map((card) => (
                  <StyleFrame
                    key={card.text}
                    $selected={card.selected}
                    $size={card.size}
                    $color={card.color}
                  >
                    <span>{card.text}</span>
                  </StyleFrame>
                ))}
              </StyleCards>
              <GalleryMore aria-label="المزيد من الأنماط"><MoreIcon /></GalleryMore>
            </Gallery>
          </GroupBody>
          <GroupLabel $launcher>أنماط</GroupLabel>
          <Corner />
        </Group>

        <Group $w={120}>
          <GroupBody $pad="3px 14px 0 0">
            <LineButton $push={19}><SearchIcon />بحث<Chevron /></LineButton>
            <LineButton><ReplaceIcon />استبدال</LineButton>
            <LineButton><SelectIcon />تحديد<Chevron /></LineButton>
          </GroupBody>
          <GroupLabel>تحرير</GroupLabel>
        </Group>

        <Group $w={72}>
          <GroupBody>
            <BigButton><MicIcon />إملاء<Chevron /></BigButton>
          </GroupBody>
          <GroupLabel>صوت</GroupLabel>
        </Group>

        <Group $w={72}>
          <GroupBody>
            <BigButton><EditorIcon />المحرر</BigButton>
          </GroupBody>
          <GroupLabel>المحرر</GroupLabel>
        </Group>

        <Group $w={97}>
          <GroupBody>
            <BigButton>
              <AddinsIcon />
              <span>
                الوظائف
                <br />
                الإضافية
              </span>
            </BigButton>
          </GroupBody>
          <GroupLabel>الوظائف الإضافية</GroupLabel>
        </Group>
      </Ribbon>

      <Workspace>
        <Paper>
          <DocLine $cols="337px 300px 158px 1fr" $h={32}>
            <span>مدرسة المراغة الابتدائية المشتركة</span>
            <span>المادة/ علوم</span>
            <span>فصل ٣/٦</span>
            <span>شهر ..............</span>
          </DocLine>
          <TableWrap>
            <GradeTable />
            <MoveHandle aria-label="نقل الجدول">
              <Icon w={14} h={14} stroke="#333" sw={1.2}>
                <path d="M7 1v12M1 7h12M5 3l2-2 2 2M5 11l2 2 2-2M3 5L1 7l2 2M11 5l2 2-2 2" />
              </Icon>
            </MoveHandle>
            <SizeHandle />
          </TableWrap>
          <DocLine $cols="431px 344px 1fr" $h={30}>
            <span>معلم المادة/</span>
            <span>الموجه/</span>
            <span>مدير المدرسة/</span>
          </DocLine>
          <Watermark>
            <strong>مستقل</strong>
            <span>mostaql.com</span>
          </Watermark>
        </Paper>
      </Workspace>

      <StatusBar>
        <StatusGroup>
          <StatusButton aria-label="تدقيق">
            <StatusIcon d="M1 12V2h7l1 2 1-2h7v10" />
          </StatusButton>
        </StatusGroup>
        <StatusGroup $gap={22} $push="393px">
          <StatusButton aria-label="إعدادات العرض">
            <StatusIcon d="M1 12V2h16v10" />
          </StatusButton>
          <StatusButton aria-label="إمكانية الوصول">
            <StatusIcon d="M3 6l5-2q1-5 2 0l5 2M9 4v8" />
          </StatusButton>
        </StatusGroup>
        <StatusGroup $push="auto">
          <StatusButton $w={50} $gap={35} aria-label="تركيز">
            <StatusIcon d="M4 2H1v10M14 2h3v10M6 4h6" />
          </StatusButton>
          <StatusButton $w={50} aria-label="وضع القراءة">
            <StatusIcon d="M1 12V2h6l2 3 2-3h6v10" />
          </StatusButton>
          <StatusButton $w={50} $active aria-label="تخطيط الطباعة">
            <StatusIcon w={16} d="M1 12V2h14v10M4 6h8" />
          </StatusButton>
          <StatusButton $w={50} $gap={68} aria-label="تخطيط ويب">
            <StatusIcon d="M1 12V2h16v10M1 6h16" />
          </StatusButton>
          <StatusButton $w={10} aria-label="تكبير">
            <StatusIcon w={8} d="M0 5h8M0 7h8" />
          </StatusButton>
        </StatusGroup>
      </StatusBar>
    </Window>
  );
};

export default App;
